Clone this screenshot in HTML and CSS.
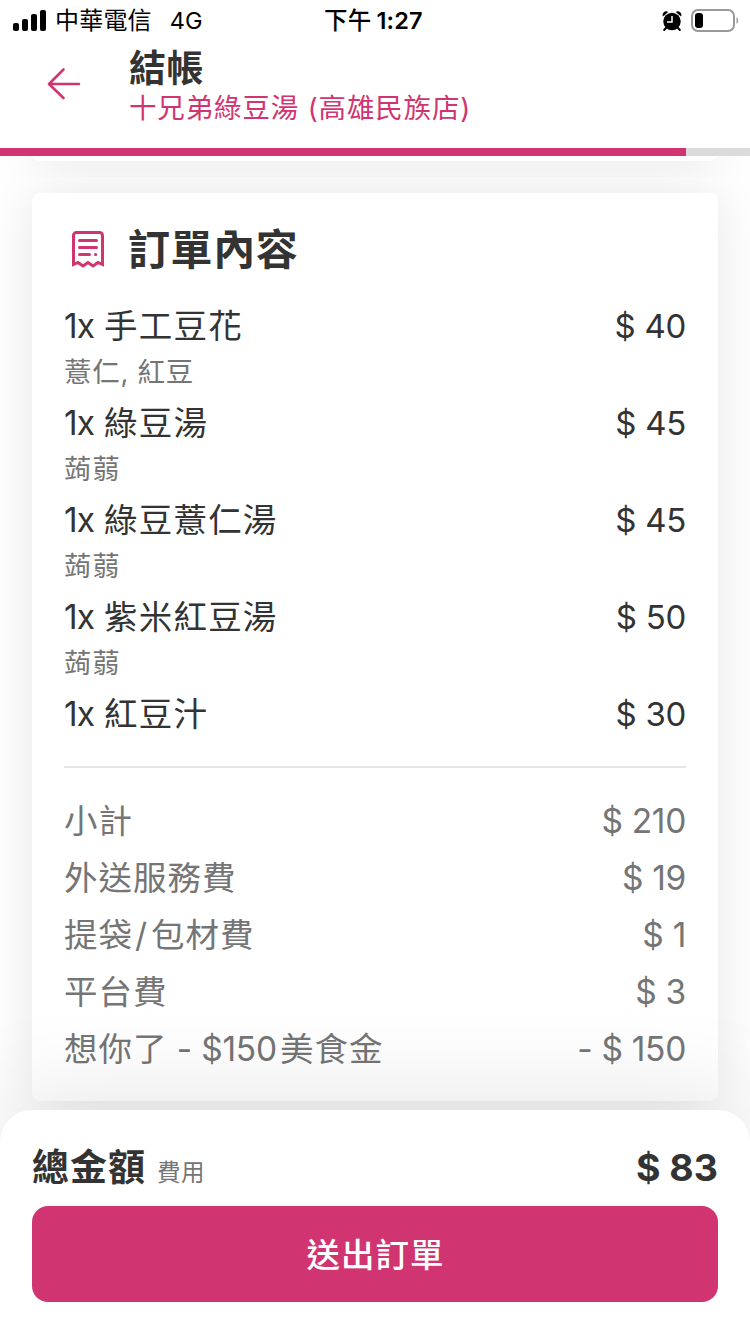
FILE: index.html
```html
<!DOCTYPE html>
<html lang="zh-Hant">
<head>
<meta charset="utf-8">
<title>結帳</title>
<link rel="stylesheet" href="styles.css">
</head>
<body>
<div class="screen">
  <div class="status">
    <div class="status-left">
      <svg class="signal" width="33" height="21" viewBox="0 0 33 21"><rect x="0" y="13" width="6" height="8" rx="2"/><rect x="9" y="9" width="6" height="12" rx="2"/><rect x="18" y="4" width="6" height="17" rx="2"/><rect x="27" y="0" width="6" height="21" rx="2"/></svg>
      <span class="carrier">中華電信</span>
      <span class="network">4G</span>
    </div>
    <div class="clock"><span class="ampm">下午</span><span>1:27</span></div>
    <div class="status-right">
      <svg width="20" height="20" viewBox="0 0 20 20"><circle cx="10" cy="10.500" r="8.700"/><path d="M1 5.500A3.600 3.600 0 0 1 6.200 .9ZM19 5.500A3.600 3.600 0 0 0 13.800 .9Z"/><path d="M4 17 2.200 19M16 17l1.800 2" stroke="#000" stroke-width="2" stroke-linecap="round"/><path d="M10 5v6H5" fill="none" stroke="#fff" stroke-width="1.500"/></svg>
      <svg width="48" height="23" viewBox="0 0 48 23"><rect x="1" y="1" width="42" height="21" rx="6" fill="none" stroke="#999" stroke-width="2"/><rect x="4" y="4" width="8" height="15" rx="3"/><path d="M45.500 8a4.500 4.500 0 0 1 0 7z" fill="#999"/></svg>
    </div>
  </div>
  <header class="header">
    <svg class="back" width="34" height="34" viewBox="0 0 34 34"><path d="M32 17H2.500M16.500 2.500 2 17l14.500 14" fill="none" stroke="#d13571" stroke-width="2.600" stroke-linecap="round" stroke-linejoin="round"/></svg>
    <div class="heading">
      <h1 class="title">結帳</h1>
      <div class="shop">十兄弟綠豆湯 (高雄民族店)</div>
    </div>
  </header>
  <div class="progress"><div class="progress-fill"></div></div>
  <main class="content">
    <div class="cell cell-previous"><div class="card card-previous"></div></div>
    <div class="cell cell-order">
      <section class="card card-order">
        <div class="card-head">
          <svg width="32" height="37" viewBox="0 0 32 37"><path d="M1.500 33.500V4.500a3 3 0 0 1 3-3h23a3 3 0 0 1 3 3v29l-4.500-2-5 3.500-5-3.500-5 3.500-5-3.500z" fill="none" stroke="#d13571" stroke-width="3"/><path d="M7.500 9.500h17M7.500 16.500h17M7.500 23.500h10M23.500 23.500h.2" stroke="#d13571" stroke-width="3" stroke-linecap="round"/></svg>
          <h2 class="card-title">訂單內容</h2>
        </div>
        <ul class="items">
          <li class="item"><div class="line"><span><span class="qty">1x</span> 手工豆花</span><span class="price">$ 40</span></div><div class="option">薏仁, 紅豆</div></li>
          <li class="item"><div class="line"><span><span class="qty">1x</span> 綠豆湯</span><span class="price">$ 45</span></div><div class="option">蒟蒻</div></li>
          <li class="item"><div class="line"><span><span class="qty">1x</span> 綠豆薏仁湯</span><span class="price">$ 45</span></div><div class="option">蒟蒻</div></li>
          <li class="item"><div class="line"><span><span class="qty">1x</span> 紫米紅豆湯</span><span class="price">$ 50</span></div><div class="option">蒟蒻</div></li>
          <li class="item"><div class="line"><span><span class="qty">1x</span> 紅豆汁</span><span class="price">$ 30</span></div></li>
        </ul>
        <div class="fees">
          <div class="fee"><span>小計</span><span class="price">$ 210</span></div>
          <div class="fee"><span>外送服務費</span><span class="price">$ 19</span></div>
          <div class="fee"><span>提袋<span class="slash">/</span>包材費</span><span class="price">$ 1</span></div>
          <div class="fee"><span>平台費</span><span class="price">$ 3</span></div>
          <div class="fee"><span>想你了<span class="latin"> - $150</span>美食金</span><span class="price">- $ 150</span></div>
        </div>
      </section>
    </div>
  </main>
  <footer class="sheet">
    <div class="total"><span class="total-label">總金額</span><span class="total-note">費用</span><span class="total-price">$ 83</span></div>
    <button class="submit">送出訂單</button>
  </footer>
</div>
</body>
</html>
```
FILE: styles.css
```css
* { box-sizing: border-box; }
body { margin: 0; background: #fff; font-family: Inter, "Noto Sans CJK TC", sans-serif; color: #333; }
h1, h2, ul { margin: 0; padding: 0; list-style: none; }
svg { display: block; flex: none; }
.screen { width: 750px; height: 1334px; display: flex; flex-direction: column; overflow: hidden; white-space: nowrap; }

.status { height: 40px; flex: none; display: grid; grid-template-columns: 1fr 104px 1fr; align-items: center; padding: 0 11px 0 13px; color: #000; line-height: 42px; font-size: 24px; }
.status-left { display: flex; align-items: center; }
.signal { margin-top: -2px; }
.carrier { margin-left: 9px; letter-spacing: .2px; }
.network { margin-left: 18px; font-size: 23.5px; }
.clock { display: flex; gap: 5px; font-weight: 600; font-size: 23.5px; letter-spacing: .2px; }
.ampm { font-weight: 500; }
.status-right { display: flex; align-items: center; justify-content: flex-end; gap: 9px; margin-top: -1px; }

.header { height: 108px; flex: none; display: flex; padding-left: 47px; }
.back { margin-top: 27px; }
.heading { margin-left: 48px; padding-top: 4px; }
.title { font-size: 37px; line-height: 49px; font-weight: 600; letter-spacing: .6px; }
.shop { font-size: 27.5px; line-height: 31px; color: #d13571; letter-spacing: .85px; }
.progress { height: 8px; flex: none; background: #dbdbdb; }
.progress-fill { width: 686px; height: 8px; background: #d13571; }

.content { flex: 1; min-height: 0; }
.cell { padding: 0 32px; overflow: hidden; }
.card { background: #fff; border-radius: 8px; box-shadow: 0 0 56px rgba(0, 0, 0, .1); }
.cell-previous { height: 21px; }
.card-previous { height: 160px; margin-top: -155px; box-shadow: 0 30px 50px rgba(0, 0, 0, .055); }
.cell-order { padding-top: 16px; height: 957px; }
.card-order { height: 908px; padding: 24px 32px; }
.card-head { display: flex; align-items: center; height: 64px; gap: 24px; padding-left: 8px; }
.card-title { padding-top: 2px; font-size: 42px; line-height: 64px; font-weight: 600; letter-spacing: .6px; }
.items { margin-top: 20px; padding-bottom: 27px; border-bottom: 2px solid #e5e5e5; }
.item + .item { margin-top: 4px; }
.line { display: flex; justify-content: space-between; height: 50px; line-height: 50px; font-size: 33.5px; letter-spacing: 1.2px; }
.qty { letter-spacing: -1px; margin-right: -.5px; }
.price { font-size: 33px; letter-spacing: -.3px; }
.option { height: 43px; line-height: 43px; font-size: 27.5px; color: #757575; letter-spacing: .7px; }
.fees { margin-top: 25px; color: #757575; }
.fee { display: flex; justify-content: space-between; height: 57px; line-height: 57px; font-size: 33.5px; letter-spacing: 1px; }
.fee .price { font-size: 33.5px; }
.slash { padding: 0 3px 0 2px; }
.latin { letter-spacing: -.2px; margin-right: 3px; }

.sheet { position: relative; height: 224px; flex: none; padding: 30px 32px 32px; background: #fff; border-radius: 32px 32px 0 0; box-shadow: 0 0 110px rgba(0, 0, 0, .13); }
.total { display: flex; align-items: baseline; height: 56px; line-height: 56px; margin-bottom: 10px; }
.total-label { font-size: 37px; font-weight: 600; letter-spacing: 1px; }
.total-note { margin-left: 11px; font-size: 23.5px; color: #757575; letter-spacing: .6px; }
.total-price { margin-left: auto; font-size: 37.5px; font-weight: 700; }
.submit { display: block; width: 100%; height: 96px; border: 0; padding: 1px 0 0 1px; border-radius: 16px; background: #d13571; color: #fff; font: 500 33.5px/96px Inter, "Noto Sans CJK TC", sans-serif; letter-spacing: 1px; }
```
